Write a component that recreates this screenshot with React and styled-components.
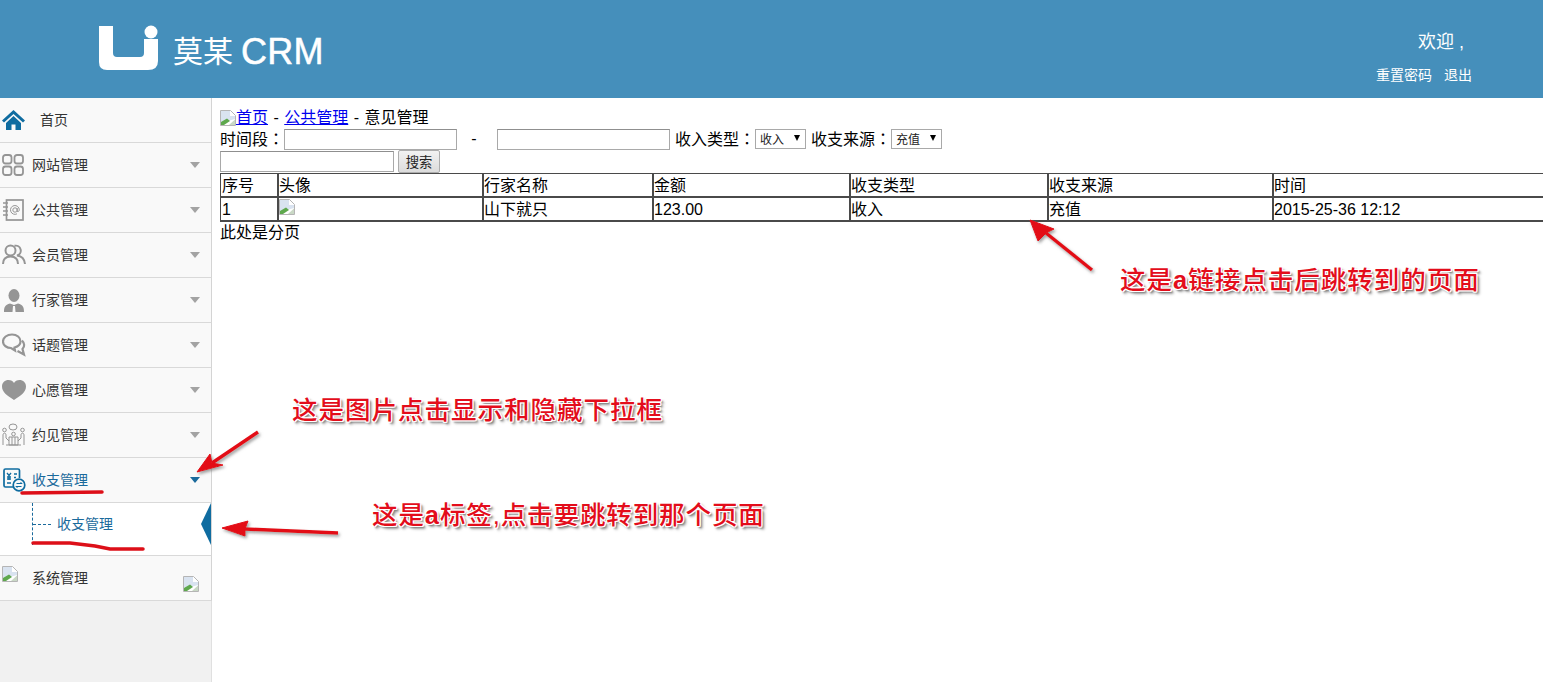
import React from "react";
import styled, { createGlobalStyle } from "styled-components";

const CJK = `"Liberation Sans", "Noto Sans CJK SC", sans-serif`;

const Global = createGlobalStyle`
  html, body { margin: 0; padding: 0; background: #fff; overflow: hidden; }
  body { font-family: ${CJK}; font-size: 16px; color: #000; }
`;

const Page = styled.div`
  position: relative;
  width: 1543px;
  height: 682px;
  overflow: hidden;
  display: flex;
  flex-direction: column;
`;

const Header = styled.header`
  flex: 0 0 98px;
  background: #458fbb;
  color: #fff;
  display: flex;
  align-items: center;
  justify-content: space-between;
  padding: 0 71px 0 98px;
`;
const Brand = styled.div`
  display: flex;
  align-items: center;
  gap: 14px;
  margin-top: -3px;
`;
const BrandText = styled.div`
  font-size: 30px;
  line-height: 36px;
  display: flex;
  align-items: center;
  gap: 8px;
  margin-top: 9px;
`;
const BrandLatin = styled.span`
  font-size: 36px;
  letter-spacing: 0.3px;
  -webkit-text-stroke: 0.5px #fff;
`;
const UserBox = styled.div`
  display: flex;
  flex-direction: column;
  align-items: flex-end;
  margin-top: 16px;
`;
const Welcome = styled.div`
  font-size: 18px;
  line-height: 24px;
  margin-right: 5px;
  width: 49px;
  white-space: pre;
`;
const UserLinks = styled.div`
  display: flex;
  gap: 12px;
  font-size: 14px;
  line-height: 20px;
  margin-top: 11px;
`;

const Main = styled.div`
  flex: 1;
  display: flex;
  min-height: 0;
`;
const Sidebar = styled.nav`
  flex: 0 0 212px;
  box-sizing: border-box;
  background: #f1f1f1;
  border-right: 1px solid #e0e0e0;
`;
const Row = styled.div`
  box-sizing: border-box;
  height: 45px;
  display: flex;
  align-items: center;
  background: #f9f9f9;
  border-bottom: 1px solid #d9d9d9;
  border-right: 1px solid #d4d4d4;
  margin-right: -1px;
  font-size: 14px;
  color: ${(p) => (p.$active ? "#1a6a9c" : "#333")};
  padding-right: 11px;
`;
const IconSlot = styled.span`
  flex: 0 0 32px;
  height: 28px;
  display: flex;
  align-items: center;
  padding-left: 2px;
  box-sizing: border-box;
`;
const TopSlot = styled(IconSlot)`
  flex-basis: 40px;
`;
const Label = styled.span`
  flex: 1;
  line-height: 20px;
`;
const Caret = styled.span`
  width: 0;
  height: 0;
  border-left: 5.5px solid transparent;
  border-right: 5.5px solid transparent;
  border-top: 6px solid ${(p) => (p.$active ? "#1a6a9c" : "#a3a3a3")};
`;
const SubPanel = styled.div`
  position: relative;
  box-sizing: border-box;
  height: 53px;
  background: #fff;
  border-bottom: 1px solid #d9d9d9;
  border-right: 1px solid #d4d4d4;
  margin-right: -1px;
  padding: 11px 0 0 57px;
  font-size: 14px;
  line-height: 20px;
  color: #1a6a9c;
  &::before {
    content: "";
    position: absolute;
    left: 32px;
    top: 0;
    height: 42px;
    width: 18px;
    border-left: 1px dashed #1a6a9c;
    background: repeating-linear-gradient(90deg, #1a6a9c 0 3px, transparent 3px 5px) 0 21px / 100% 1px no-repeat;
  }
  &::after {
    content: "";
    position: absolute;
    right: 0;
    top: 0;
    border-top: 21px solid transparent;
    border-bottom: 21px solid transparent;
    border-right: 10px solid #0f6ca0;
  }
`;
const SystemCaret = styled.span`
  display: flex;
  align-self: flex-start;
  margin: 20px 1px 0 0;
`;
const SystemSlot = styled(IconSlot)`
  align-self: flex-start;
  align-items: flex-start;
  margin-top: 10px;
`;

const Content = styled.main`
  flex: 1;
  min-width: 0;
  padding: 10px 0 0 8px;
  font-size: 16px;
  line-height: 20px;
  overflow: hidden;
`;
const Crumbs = styled.div`
  display: flex;
  align-items: center;
  height: 20px;
  white-space: pre;
`;
const Link = styled.a`
  color: #0000ee;
  text-decoration: underline;
`;
const Sep = styled.span`
  margin: 0 1px;
`;
const FormRow = styled.div`
  display: flex;
  align-items: center;
  height: ${(p) => p.$h || 22}px;
  white-space: pre;
`;
const Colon = styled.span`
  font-family: "Noto Sans CJK TC", sans-serif;
`;
const FieldLabel = styled.span`
  margin-left: ${(p) => p.$gap || 0}px;
`;
const Field = styled.input`
  box-sizing: border-box;
  width: ${(p) => p.$w || 173}px;
  height: 21px;
  margin: 0;
  padding: 0 2px;
  border: 1px solid #a9a9a9;
  border-top-color: #8f8f8f;
  background: #fff;
`;
const Dash = styled.span`
  width: 40px;
  padding-right: 6px;
  box-sizing: border-box;
  text-align: center;
`;
const SelectWrap = styled.span`
  position: relative;
  display: inline-flex;
  margin-right: 5px;
  &::after {
    content: "";
    position: absolute;
    right: 6px;
    top: 6px;
    border-left: 3.5px solid transparent;
    border-right: 3.5px solid transparent;
    border-top: 6px solid #000;
  }
`;
const Select = styled.select`
  appearance: none;
  box-sizing: border-box;
  width: 51px;
  height: 20px;
  margin: 0;
  padding: 1px 0 0 4px;
  border: 1px solid #a9a9a9;
  border-radius: 0;
  background: #fff;
  color: #222;
  font-family: ${CJK};
  font-size: 12px;
`;
const Button = styled.button`
  box-sizing: border-box;
  width: 42px;
  height: 23px;
  margin: 0 0 0 4px;
  padding: 0;
  border: 1px solid #adadad;
  border-radius: 2px;
  background: linear-gradient(#f2f2f2, #dcdcdc);
  color: #222;
  font-family: ${CJK};
  font-size: 13.33px;
`;
const Table = styled.table`
  table-layout: fixed;
  width: 1330px;
  border-collapse: separate;
  border-spacing: 0;
  border-top: 1px solid #4a4a4a;
  border-left: 1px solid #4a4a4a;
`;
const Cell = styled.td`
  box-sizing: border-box;
  height: 24px;
  padding: 1px 0 0 0;
  border-right: 2px solid #4a4a4a;
  border-bottom: 2px solid #4a4a4a;
  font-weight: 400;
  line-height: 21px;
  text-align: left;
  vertical-align: middle;
  white-space: nowrap;
  &:first-child {
    padding-left: 1px;
  }
`;
const HeadRow = styled.tr`
  height: 24px;
`;
const Pager = styled.div`
  line-height: 22px;
`;

const Overlay = styled.svg`
  position: absolute;
  left: 0;
  top: 0;
  pointer-events: none;
  overflow: visible;
`;
const Note = styled.div`
  position: absolute;
  left: ${(p) => p.$x}px;
  top: ${(p) => p.$y}px;
  font-size: 25.5px;
  line-height: 34px;
  letter-spacing: ${(p) => p.$ls ?? 1}px;
  white-space: nowrap;
  color: #e30d1b;
  font-weight: 500;
  text-shadow:
    1px 0 0 #fff, -1px 0 0 #fff, 0 1px 0 #fff, 0 -1px 0 #fff,
    1px 1px 0 #fff, -1px -1px 0 #fff, 1px -1px 0 #fff, -1px 1px 0 #fff,
    2px 2px 2px #777, 3px 3px 3px #aaa;
`;

const Grey = "#959595";
const Blue = "#0f6ca0";

const HomeIcon = () => (
  <svg width="23" height="20" viewBox="0 0 23 20">
    <path fill={Blue} d="M11.5 0 23 10.5 21 12.5 11.5 4 2 12.500 0 10.500Z" />
    <path fill={Blue} d="M4 13 11.500 6 19 13V20H13.500V14.500H9.500V20H4Z" />
  </svg>
);
const GridIcon = () => (
  <svg width="22" height="22" viewBox="0 0 22 22" fill="none" stroke={Grey} strokeWidth="1.8">
    <rect x="1" y="1" width="8.500" height="8.500" rx="2.500" />
    <rect x="12.500" y="1" width="8.500" height="8.500" rx="2.500" />
    <rect x="1" y="12.500" width="8.500" height="8.500" rx="2.500" />
    <rect x="12.500" y="12.500" width="8.500" height="8.500" rx="2.500" />
  </svg>
);
const BookIcon = () => (
  <svg width="22" height="22" viewBox="0 0 22 22" fill="none" stroke={Grey}>
    <rect x="4.500" y="1" width="16.500" height="20" strokeWidth="1.700" />
    <path d="M1 4H6M1 8H6M1 12H6M1 16H6" strokeWidth="1.700" />
    <circle cx="13" cy="11" r="2.200" strokeWidth="1" />
    <path d="M15.200 9V12.500C16.800 13 17.300 11.500 17.300 10.800A4.400 4.400 0 1 0 15 14.800" strokeWidth="1" />
  </svg>
);
const UsersIcon = () => (
  <svg width="24" height="22" viewBox="0 0 24 22" fill="none" stroke={Grey} strokeWidth="2">
    <circle cx="8.500" cy="6.500" r="5" />
    <path d="M1 20C1 15 4 12.500 8.500 12.500S16 15 16 20" />
    <path d="M12.500 1.800A5 5 0 0 1 15 11.500C19.500 12 22.500 15 23 20" />
  </svg>
);
const ManIcon = () => (
  <svg width="22" height="23" viewBox="0 0 22 23">
    <ellipse cx="12" cy="6.500" rx="5.500" ry="6.500" fill={Grey} />
    <path fill={Grey} d="M2 23C2 18 3 16 8 14.500L12 16 16 14.500C21 16 22 18 22 23Z" />
    <path fill="#f9f9f9" d="M11 17H13L13.500 23H10.500Z" />
  </svg>
);
const ChatIcon = () => (
  <svg width="24" height="24" viewBox="0 0 24 24" fill="none" stroke={Grey} strokeWidth="2.200">
    <path d="M10 1.500C5 1.500 1 4.500 1 8.500S5 15 9 15L13 17.500 12.500 14.500C16 13.500 18.500 11.500 18.500 8.500 18.500 4.500 15 1.500 10 1.500Z" />
    <path d="M20 7.500C22.500 10 23 13.500 20.500 16L22 21.500 15.500 18" />
  </svg>
);
const HeartIcon = () => (
  <svg width="24" height="20" viewBox="0 0 24 20">
    <path fill={Grey} d="M12 20C5 15.500 0 12 0 6.500 0 2.500 3 0 6.500 0 9 0 11 1.200 12 3 13 1.200 15 0 17.500 0 21 0 24 2.500 24 6.500 24 12 19 15.500 12 20Z" />
  </svg>
);
const MeetIcon = () => (
  <svg width="23" height="24" viewBox="0 0 23 24" fill="none" stroke={Grey} strokeWidth="1">
    <ellipse cx="11" cy="4" rx="4" ry="3" />
    <circle cx="2.500" cy="7" r="1.800" />
    <circle cx="20.500" cy="7" r="1.800" />
    <path d="M1 22V12C1 9.500 4 9.500 4 12V15L7 18M22 22V12C22 9.500 19 9.500 19 12V15L16 18" />
    <circle cx="11.500" cy="11" r="1.800" />
    <path d="M7 14H16V22H7ZM10 14V22M13 14V22M4 22H19" />
  </svg>
);
const BillIcon = () => (
  <svg width="24" height="24" viewBox="0 0 24 24" fill="none" stroke={Blue} strokeWidth="1.700">
    <path d="M12 19H3.500Q2 19 2 17.500V2.500Q2 1 3.500 1H16Q17.500 1 17.500 2.500V10" />
    <path d="M5 5 7 7.500 9 5M7 7.500V12M5 9H9M5 11H9M12 6H15M5 15H9M12 9.500H14" strokeWidth="1.300" />
    <circle cx="17" cy="17" r="5.800" />
    <path d="M14.500 15.500H19.500L18.500 14.500M19.500 18.500H14.500L15.500 19.500" strokeWidth="1.100" />
  </svg>
);
const Broken = () => (
  <svg width="16" height="16" viewBox="0 0 16 16">
    <path fill="#fff" stroke="#b5b5b5" d="M.5.500H10.500L15.500 5.500V15.500H.5Z" />
    <path fill="#d9e3f0" d="M1 1H10V6H15V9L1 13Z" />
    <path fill="#5ea84d" d="M1 15V12L7 8.500 10 11 4 15Z" />
    <path fill="#c9d8c5" d="M9 15 15 9.500V15Z" />
  </svg>
);

const menu = [
  ["网站管理", GridIcon],
  ["公共管理", BookIcon],
  ["会员管理", UsersIcon],
  ["行家管理", ManIcon],
  ["话题管理", ChatIcon],
  ["心愿管理", HeartIcon],
  ["约见管理", MeetIcon],
];

const widths = [58, 205, 170, 197, 198, 225, 277];

export default function App() {
  return (
    <Page>
      <Global />
      <Header>
        <Brand>
          <svg width="61" height="46" viewBox="0 0 61 46">
            <path fill="#fff" d="M1 1H15V28Q15 32 19 32H42Q46 32 46 28V14H60V36Q60 45 50 45H9Q1 45 1 37Z" />
            <circle cx="53" cy="7" r="6.500" fill="#fff" />
          </svg>
          <BrandText>
            莫某<BrandLatin>CRM</BrandLatin>
          </BrandText>
        </Brand>
        <UserBox>
          <Welcome>欢迎 ,</Welcome>
          <UserLinks>
            <span>重置密码</span>
            <span>退出</span>
          </UserLinks>
        </UserBox>
      </Header>
      <Main>
        <Sidebar>
          <Row>
            <TopSlot>
              <HomeIcon />
            </TopSlot>
            <Label>首页</Label>
          </Row>
          {menu.map(([name, Icon]) => (
            <Row key={name}>
              <IconSlot>
                <Icon />
              </IconSlot>
              <Label>{name}</Label>
              <Caret />
            </Row>
          ))}
          <Row $active>
            <IconSlot>
              <BillIcon />
            </IconSlot>
            <Label>收支管理</Label>
            <Caret $active />
          </Row>
          <SubPanel>收支管理</SubPanel>
          <Row>
            <SystemSlot>
              <Broken />
            </SystemSlot>
            <Label>系统管理</Label>
            <SystemCaret>
              <Broken />
            </SystemCaret>
          </Row>
        </Sidebar>
        <Content>
          <Crumbs>
            <Broken />
            <Link href="#">首页</Link>
            <Sep> - </Sep>
            <Link href="#">公共管理</Link>
            <Sep> - </Sep>
            意见管理
          </Crumbs>
          <FormRow>
            <FieldLabel>
              时间段<Colon>：</Colon>
            </FieldLabel>
            <Field />
            <Dash>-</Dash>
            <Field />
            <FieldLabel $gap={5}>
              收入类型<Colon>：</Colon>
            </FieldLabel>
            <SelectWrap>
              <Select defaultValue="收入">
                <option>收入</option>
              </Select>
            </SelectWrap>
            <FieldLabel>
              收支来源<Colon>：</Colon>
            </FieldLabel>
            <SelectWrap>
              <Select defaultValue="充值">
                <option>充值</option>
              </Select>
            </SelectWrap>
          </FormRow>
          <FormRow $h={23}>
            <Field $w={174} />
            <Button>搜索</Button>
          </FormRow>
          <Table>
            <colgroup>
              {widths.map((w, i) => (
                <col key={i} style={{ width: w }} />
              ))}
            </colgroup>
            <thead>
              <HeadRow>
                {["序号", "头像", "行家名称", "金额", "收支类型", "收支来源", "时间"].map((h) => (
                  <Cell as="th" key={h}>
                    {h}
                  </Cell>
                ))}
              </HeadRow>
            </thead>
            <tbody>
              <HeadRow>
                <Cell>1</Cell>
                <Cell>
                  <Broken />
                </Cell>
                <Cell>山下就只</Cell>
                <Cell>123.00</Cell>
                <Cell>收入</Cell>
                <Cell>充值</Cell>
                <Cell>2015-25-36 12:12</Cell>
              </HeadRow>
            </tbody>
          </Table>
          <Pager>此处是分页</Pager>
        </Content>
      </Main>

      <Overlay width="1543" height="682" viewBox="0 0 1543 682">
        <defs>
          <filter id="soft" x="-20%" y="-20%" width="140%" height="140%">
            <feDropShadow dx="1.500" dy="2" stdDeviation="1.500" floodColor="#777" floodOpacity="0.7" />
          </filter>
        </defs>
        <g fill="#e30d17" stroke="#e30d17" filter="url(#soft)">
          <path d="M1092 270 1046 233" strokeWidth="3.500" fill="none" />
          <path d="M1030 220 1054 229 1046 233 1038 241Z" strokeWidth="1" />
          <path d="M258 432 212 463" strokeWidth="3.500" fill="none" />
          <path d="M197 472 210 454 212 463 223 465Z" strokeWidth="1" />
          <path d="M338 533 245 529" strokeWidth="3.500" fill="none" />
          <path d="M222 528 248 521 245 529 245 536Z" strokeWidth="1" />
        </g>
        <g fill="none" stroke="#dd0f18" strokeWidth="3.500" strokeLinecap="round">
          <path d="M22 493 102 492" />
          <path d="M33 543 70 543 95 546 110 549 143 549" />
        </g>
      </Overlay>
      <Note $x={1120} $y={263}>这是<b>a</b>链接点击后跳转到的页面</Note>
      <Note $x={292} $y={393}>这是图片点击显示和隐藏下拉框</Note>
      <Note $x={372} $y={498} $ls={0.9}>这是<b>a</b>标签,点击要跳转到那个页面</Note>
    </Page>
  );
}
